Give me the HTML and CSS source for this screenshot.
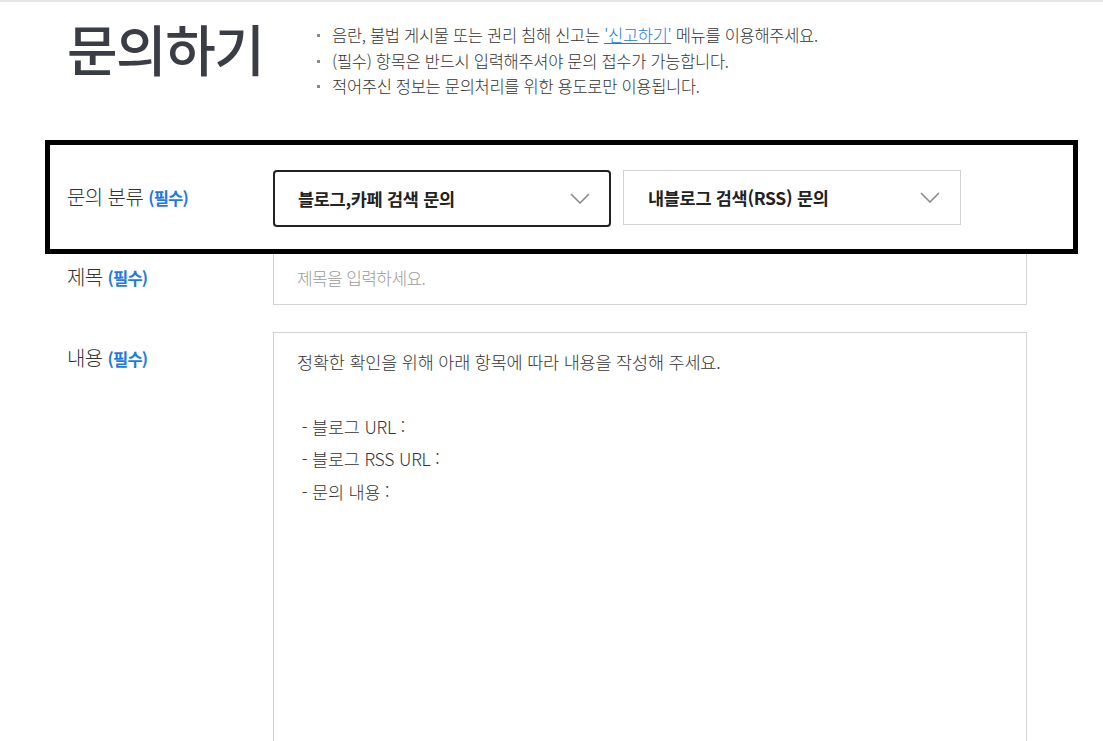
FILE: index.html
```html
<!DOCTYPE html>
<html lang="ko">
<head>
<meta charset="utf-8">
<title>문의하기</title>
<link rel="stylesheet" href="styles.css">
</head>
<body>
<div class="page">
  <header class="head">
    <h1 class="title">문의하기</h1>
    <ul class="notes">
      <li>음란, 불법 게시물 또는 권리 침해 신고는 <a class="link" href="#">'신고하기'</a> 메뉴를 이용해주세요.</li>
      <li>(필수) 항목은 반드시 입력해주셔야 문의 접수가 가능합니다.</li>
      <li>적어주신 정보는 문의처리를 위한 용도로만 이용됩니다.</li>
    </ul>
  </header>

  <form class="form">
    <div class="row row-cat">
      <div class="label">문의 분류 <span class="req">(필수)</span></div>
      <div class="field selects">
        <div class="select active">
          <span>블로그,카페 검색 문의</span>
          <svg class="chev" width="20" height="11" viewBox="0 0 20 11"><polyline points="1,1 10,10 19,1" fill="none" stroke="#8a8a8a" stroke-width="1.6"/></svg>
        </div>
        <div class="select">
          <span>내블로그 검색(RSS) 문의</span>
          <svg class="chev" width="20" height="11" viewBox="0 0 20 11"><polyline points="1,1 10,10 19,1" fill="none" stroke="#8a8a8a" stroke-width="1.6"/></svg>
        </div>
      </div>
      <div class="highlight"></div>
    </div>

    <div class="row row-subject">
      <div class="label">제목 <span class="req">(필수)</span></div>
      <div class="field">
        <div class="input placeholder">제목을 입력하세요.</div>
      </div>
    </div>

    <div class="row row-body">
      <div class="label label-top">내용 <span class="req">(필수)</span></div>
      <div class="field">
        <div class="textarea">
          <p>정확한 확인을 위해 아래 항목에 따라 내용을 작성해 주세요.</p>
          <p>&nbsp;</p>
          <p>&nbsp;- 블로그 URL :</p>
          <p>&nbsp;- 블로그 RSS URL :</p>
          <p>&nbsp;- 문의 내용 :</p>
        </div>
      </div>
    </div>
  </form>
</div>
</body>
</html>
```

FILE: styles.css
```css
* { box-sizing: border-box; }
html, body { margin: 0; padding: 0; }
body {
  background: #fff;
  border-top: 2px solid #e6e6e6;
  font-family: "Noto Sans CJK KR", "Noto Sans", sans-serif;
  color: #333;
  overflow: hidden;
  height: 741px;
}
.page {
  width: 960px;
  margin-left: 67px;
}
.head {
  display: flex;
  align-items: flex-start;
  padding-top: 9px;
}
.title {
  margin: 0;
  width: 249px;
  font-size: 55px;
  line-height: 72px;
  font-weight: 500;
  letter-spacing: -1.5px;
  color: #3a3d46;
}
.notes {
  list-style: none;
  margin: 12px 0 0 0;
  padding: 0;
  font-size: 16.5px;
  line-height: 25.5px;
  font-weight: 300;
  color: #333;
  letter-spacing: -0.3px;
}
.notes li {
  position: relative;
  padding-left: 16px;
}
.notes li::before {
  content: "";
  position: absolute;
  left: 1px;
  top: 11px;
  width: 3px;
  height: 3px;
  background: #888;
}
.link {
  color: #1f7ae0;
  text-decoration: underline;
}
.form {
  margin-top: 70px;
}
.row {
  display: grid;
  grid-template-columns: 206px 754px;
  align-items: center;
}
.row-cat {
  position: relative;
  height: 56px;
}
.row-subject {
  margin-top: 24px;
  height: 55px;
}
.row-body {
  margin-top: 27px;
  align-items: start;
}
.label {
  font-size: 20px;
  font-weight: 300;
  color: #333;
  letter-spacing: -0.6px;
  line-height: 24px;
}
.label-top {
  padding-top: 14px;
}
.req {
  color: #1f7ae0;
  font-size: 16.5px;
  font-weight: 700;
  letter-spacing: -0.8px;
}
.selects {
  display: flex;
  gap: 12px;
  height: 56px;
}
.select {
  width: 338px;
  height: 56px;
  border: 1px solid #d2d2d2;
  display: flex;
  align-items: center;
  justify-content: space-between;
  padding: 0 20px 0 24px;
  font-size: 17.5px;
  font-weight: 700;
  color: #222;
  letter-spacing: -0.3px;
}
.select.active {
  border: 2px solid #222;
  border-radius: 4px;
  height: 57px;
  padding-left: 23px;
  padding-right: 19px;
}
.select:not(.active) {
  height: 55px;
}
.highlight {
  position: absolute;
  left: -22px;
  top: -30px;
  width: 1033px;
  height: 114px;
  border: 5px solid #000;
  pointer-events: none;
}
.input {
  height: 55px;
  border: 1px solid #d2d2d2;
  display: flex;
  align-items: center;
  padding-left: 23px;
  font-size: 17px;
  font-weight: 300;
  letter-spacing: -0.6px;
}
.placeholder { color: #9a9a9a; }
.textarea {
  height: 440px;
  border: 1px solid #d2d2d2;
  padding: 13px 23px;
  font-size: 17.5px;
  font-weight: 300;
  color: #333;
  letter-spacing: -0.2px;
  line-height: 32.5px;
}
.textarea p {
  margin: 0;
  white-space: pre;
}
```
